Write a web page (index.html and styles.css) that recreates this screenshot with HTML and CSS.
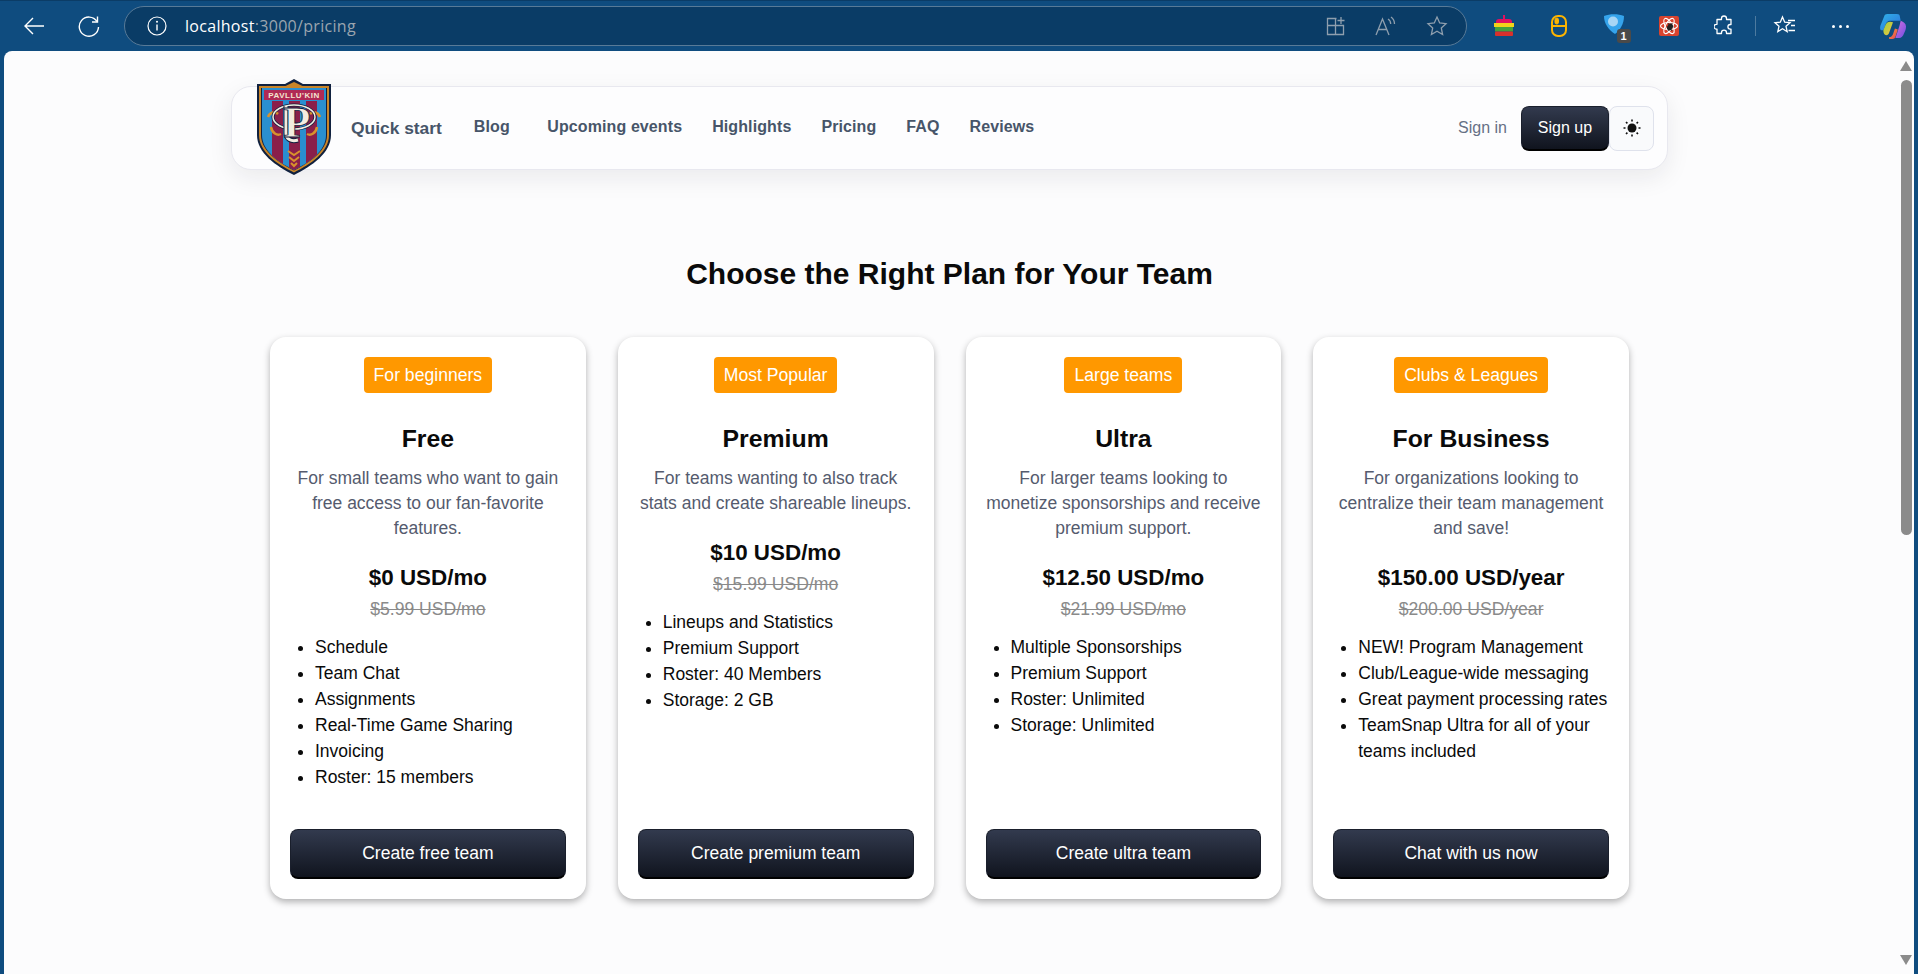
FILE: index.html

```html
<!DOCTYPE html>
<html lang="en">
  <head>
    <meta charset="UTF-8" />
    <meta name="viewport" content="width=device-width, initial-scale=1.0" />
    <title>Pricing</title>
    <link rel="stylesheet" href="styles.css">
  </head>
  <body>
    <!-- browser toolbar -->
    <div class="toolbar">
      <svg class="tool back" width="24" height="24" viewBox="0 0 24 24"><path d="M22 12H3M11 4l-8 8 8 8" fill="none" stroke="#fff" stroke-width="1.4"/></svg>
      <svg class="tool reload" width="24" height="24" viewBox="0 0 24 24"><path d="M20 7.5A9.6 9.6 0 1 0 21.5 13" fill="none" stroke="#fff" stroke-width="1.4"/><path d="M20.5 2.5v5.5h-5.5" fill="none" stroke="#fff" stroke-width="1.4"/></svg>
      <div class="address">
        <svg width="20" height="20" viewBox="0 0 20 20"><circle cx="10" cy="10" r="9" fill="none" stroke="#fff" stroke-width="1.2"/><path d="M10 8.5v6" stroke="#fff" stroke-width="1.4"/><circle cx="10" cy="5.8" r="1" fill="#fff"/></svg>
        <span class="url"><span class="host">localhost</span>:3000/pricing</span>
        <div class="address-icons">
          <svg width="20" height="20" viewBox="0 0 20 20" fill="none" stroke="#8f9fae" stroke-width="1.3"><path d="M10.500 2.500H1.500v16h16V9.500H1.500M9.500 2.500v16"/><path d="M15 1v7M11.500 4.500h7"/></svg>
          <svg width="22" height="20" viewBox="0 0 22 20" fill="none" stroke="#8f9fae" stroke-width="1.3"><path d="M1 19 7.500 3 14 19M3.500 13.500h8"/><path d="M13 3c1.700 1 2.700 3 2.700 5M16 1c2 1.500 3.500 4 3.500 7"/></svg>
          <svg width="22" height="22" viewBox="0 0 22 22" fill="none" stroke="#8f9fae" stroke-width="1.3"><path d="M11 2l2.700 6 6.300.7-4.700 4.300 1.300 6.500L11 16.200 5.400 19.500 6.700 13 2 8.700 8.300 8z"/></svg>
        </div>
      </div>
      <div class="extensions">
        <span class="ext-slot">
          <svg width="20" height="22" viewBox="0 0 20 22"><rect x="9" y="0" width="2" height="5" fill="#e0115f"/><path d="M2 9V7c0-2 1-3 3-3h10c2 0 3 1 3 3v2z" fill="#e0115f"/><rect x="0" y="8" width="20" height="4" fill="#f2d21a"/><rect x="1" y="12" width="18" height="4.500" fill="#43a33b"/><rect x="1" y="16.500" width="18" height="4.500" rx="1" fill="#d9302c"/></svg>
        </span>
        <span class="ext-slot">
          <svg width="16" height="22" viewBox="0 0 16 22" fill="none" stroke="#fdb400" stroke-width="2"><rect x="1" y="1" width="14" height="20" rx="6"/><path d="M1 11h14"/><rect x="4" y="3" width="3.500" height="6" rx="1.700" fill="#fdb400" stroke-width="1"/></svg>
        </span>
        <span class="ext-slot">
          <span class="shield-ext">
            <svg width="20" height="20" viewBox="0 0 20 20"><path d="M0 2C6-.5 14-.5 20 2c0 8-4 14-9 18C5 16 0 10 0 2z" fill="#35a4ec"/><circle cx="9" cy="7.500" r="5" fill="#a7d6f5"/></svg>
            <span class="ext-count">1</span>
          </span>
        </span>
        <span class="ext-slot">
          <svg width="20" height="20" viewBox="0 0 20 20"><rect width="20" height="20" rx="2" fill="#d9442f"/><g fill="none" stroke="#fff" stroke-width="1.100"><ellipse cx="10" cy="10" rx="8.500" ry="3.500"/><ellipse cx="10" cy="10" rx="8.500" ry="3.500" transform="rotate(60 10 10)"/><ellipse cx="10" cy="10" rx="8.500" ry="3.500" transform="rotate(120 10 10)"/></g><ellipse cx="11" cy="11" rx="2.600" ry="3.600" transform="rotate(30 11 11)" fill="#222"/><path d="M7.500 11l7 0M9 7l4 8M13 7l-4 8" stroke="#222" stroke-width=".8"/></svg>
        </span>
        <span class="ext-slot">
          <svg width="20" height="22" viewBox="0 0 20 22"><path d="M7.500 3.500a2.500 2.500 0 0 1 5 0V4.500h4.500v5h-.8a2.300 2.300 0 0 0 0 4.600h.8v4.400h-4.500v-.8a2.500 2.500 0 0 0-5 0v.8H3v-4.400h-.6a2.400 2.400 0 0 1 0-4.800H3V4.500h4.500z" fill="none" stroke="#fff" stroke-width="1.300" stroke-linejoin="round"/></svg>
        </span>
        <span class="tool-sep"></span>
        <span class="ext-slot">
          <svg width="24" height="24" viewBox="0 0 24 24" fill="none" stroke="#fff" stroke-width="1.300"><path d="M9.500 3l2.200 5.200 5.300.5-4 3.600 1.200 5.400-4.700-2.900-4.700 2.900 1.200-5.400-4-3.600 5.300-.5z"/><path d="M15 6.500h7M18 11.500h4M15.500 16.500h6.500"/></svg>
        </span>
        <span class="ext-slot dots"><i></i><i></i><i></i></span>
        <span class="ext-slot copilot">
          <svg width="28" height="27" viewBox="0 0 28 28"><defs><linearGradient id="cp1" x1="0" y1="0" x2="1" y2="1"><stop offset="0" stop-color="#2fb3e8"/><stop offset="1" stop-color="#2e6fdc"/></linearGradient><linearGradient id="cp2" x1="0" y1="0" x2="1" y2="1"><stop offset="0" stop-color="#d96fe0"/><stop offset="1" stop-color="#6d4fe0"/></linearGradient><linearGradient id="cp3" x1="0" y1="0" x2="1" y2="1"><stop offset="0" stop-color="#9ad045"/><stop offset="1" stop-color="#f5c43c"/></linearGradient><linearGradient id="cp4" x1="0" y1="0" x2="1" y2="1"><stop offset="0" stop-color="#f0a030"/><stop offset="1" stop-color="#e83c5c"/></linearGradient></defs><path d="M8 1h10c2 0 3 1 3 2l1 5H12c-4 0-5 2-6 5l-2 5H2C1 18 0 16 1 13L5 3c.5-1.300 1.500-2 3-2z" fill="url(#cp1)"/><path d="M22 8c3 1 5.500 3 5.500 6 0 3-1 5-2 7-1 3-3 5-5 5h-4l3-9c1-3 2-6 2.500-9z" fill="url(#cp2)"/><path d="M4 18l2-5c1-3 3-4 5-4l3 .5-4 11c-.5 1.500-1.500 2.500-3 2.500-2 0-3-2-3-5z" fill="url(#cp3)"/><path d="M10 25c2 0 3-1 4-3l2-6 3 1-2.500 8c-.5 1.200-1.500 2-3 2H10z" fill="url(#cp4)"/></svg>
        </span>
      </div>
    </div>

    <div class="page">
      <header class="nav">
        <svg class="logo" width="76" height="96" viewBox="0 0 76 96">
          <defs>
            <clipPath id="shieldclip"><path d="M6 9h64v47c0 16-16 27-32 35C22 83 6 72 6 56z"/></clipPath>
          </defs>
          <path d="M1 5h28l9-5 9 5h28v51c0 18-19 31-37 40C20 87 1 74 1 56z" fill="#10213f"/>
          <path d="M3 7h26.500l8.500-4 8.500 4H73v49c0 17-18 29-35 37.500C21 85 3 73 3 56z" fill="#c98528"/>
          <path d="M5 9h66v47c0 16-17 27-33 35.500C22 83 5 72 5 56z" fill="#10213f"/>
          <g clip-path="url(#shieldclip)">
            <rect x="6" y="9" width="64" height="86" fill="#2a8fd0"/>
            <rect x="16" y="22" width="11" height="72" fill="#8a1f4a"/>
            <rect x="33" y="22" width="11" height="72" fill="#8a1f4a"/>
            <rect x="50" y="22" width="11" height="72" fill="#8a1f4a"/>
            <rect x="8" y="11" width="60" height="10" fill="#b02a55"/>
          </g>
          <text class="logo-name" x="38" y="19" text-anchor="middle">PAVLLU'KIN</text>
          <path d="M12 38c2-5 7-6 10-3M64 38c-2-5-7-6-10-3M15 48c1 6 6 9 10 7M61 48c-1 6-6 9-10 7" fill="none" stroke="#d8922c" stroke-width="2.500"/>
          <ellipse cx="38" cy="38" rx="21" ry="12" fill="none" stroke="#10213f" stroke-width="3"/>
          <ellipse cx="38" cy="38" rx="21" ry="12" fill="none" stroke="#f3ece0" stroke-width="1.500"/>
          <path d="M30 27v27c0 6 5 9 12 7" fill="none" stroke="#10213f" stroke-width="5"/>
          <path d="M30 27v27c0 6 5 9 12 7" fill="none" stroke="#f3ece0" stroke-width="3"/>
          <text class="logo-mono" x="41" y="58" text-anchor="middle">P</text>
          <path d="M32 72l6 4 6-4M33 78l5 4 5-4M35 84l3 3 3-3" fill="none" stroke="#d8922c" stroke-width="2"/>
        </svg>
        <a class="nav-brand">Quick start</a>
        <nav class="nav-links">
          <a class="blog-link">Blog</a>
          <a>Upcoming events</a>
          <a>Highlights</a>
          <a>Pricing</a>
          <a>FAQ</a>
          <a>Reviews</a>
        </nav>
        <div class="nav-right">
          <a class="sign-in">Sign in</a>
          <button class="btn-dark sign-up">Sign up</button>
          <button class="theme-btn">
            <svg width="20" height="20" viewBox="0 0 20 20"><circle cx="10" cy="10" r="4.500" fill="#111"/><path d="M10 1.500v2M10 16.500v2M1.500 10h2M16.500 10h2M4 4l1.400 1.400M14.600 14.600 16 16M4 16l1.400-1.400M14.600 5.400 16 4" stroke="#111" stroke-width="1.600"/></svg>
          </button>
        </div>
      </header>

      <h1 class="title">Choose the Right Plan for Your Team</h1>

      <main class="plans">
        <section class="card">
          <span class="badge">For beginners</span>
          <h2>Free</h2>
          <p class="desc">For small teams who want to gain free access to our fan-favorite features.</p>
          <div class="price">$0 USD/mo</div>
          <div class="old-price">$5.99 USD/mo</div>
          <ul>
            <li>Schedule</li>
            <li>Team Chat</li>
            <li>Assignments</li>
            <li>Real-Time Game Sharing</li>
            <li>Invoicing</li>
            <li>Roster: 15 members</li>
          </ul>
          <button class="btn-dark card-btn">Create free team</button>
        </section>

        <section class="card">
          <span class="badge">Most Popular</span>
          <h2>Premium</h2>
          <p class="desc">For teams wanting to also track stats and create shareable lineups.</p>
          <div class="price">$10 USD/mo</div>
          <div class="old-price">$15.99 USD/mo</div>
          <ul>
            <li>Lineups and Statistics</li>
            <li>Premium Support</li>
            <li>Roster: 40 Members</li>
            <li>Storage: 2 GB</li>
          </ul>
          <button class="btn-dark card-btn">Create premium team</button>
        </section>

        <section class="card">
          <span class="badge">Large teams</span>
          <h2>Ultra</h2>
          <p class="desc">For larger teams looking to monetize sponsorships and receive premium support.</p>
          <div class="price">$12.50 USD/mo</div>
          <div class="old-price">$21.99 USD/mo</div>
          <ul>
            <li>Multiple Sponsorships</li>
            <li>Premium Support</li>
            <li>Roster: Unlimited</li>
            <li>Storage: Unlimited</li>
          </ul>
          <button class="btn-dark card-btn">Create ultra team</button>
        </section>

        <section class="card">
          <span class="badge">Clubs &amp; Leagues</span>
          <h2>For Business</h2>
          <p class="desc">For organizations looking to centralize their team management and save!</p>
          <div class="price">$150.00 USD/year</div>
          <div class="old-price">$200.00 USD/year</div>
          <ul>
            <li>NEW! Program Management</li>
            <li>Club/League-wide messaging</li>
            <li>Great payment processing rates</li>
            <li>TeamSnap Ultra for all of your teams included</li>
          </ul>
          <button class="btn-dark card-btn">Chat with us now</button>
        </section>
      </main>

      <!-- fake scrollbar, sits over the page -->
      <div class="scrollbar">
        <span class="arrow up"></span>
        <span class="thumb"></span>
        <span class="arrow down"></span>
      </div>
    </div>
  </body>
</html>
```

FILE: styles.css

```css
* {
  box-sizing: border-box;
}

html,
body {
  height: 100%;
}

body {
  margin: 0;
  display: flex;
  flex-direction: column;
  overflow: hidden;
  font-family: "Liberation Sans", Arial, sans-serif;
  background-color: #0f4c7f;
}

/* browser chrome */
.toolbar {
  height: 51px;
  flex: none;
  display: flex;
  align-items: center;
  padding: 0 0 0 22px;
  border-top: 1px solid #0b3c66;
}

.tool.back {
  margin-right: 31px;
}

.tool.reload {
  margin-right: 23px;
}

.address {
  width: 1343px;
  height: 40px;
  flex: none;
  display: flex;
  align-items: center;
  padding: 0 18px 0 22px;
  background-color: #0a3c66;
  border: 1px solid #587a97;
  border-radius: 20px;
}

.url {
  margin-left: 18px;
  font-family: "Open Sans", sans-serif;
  font-size: 16px;
  letter-spacing: 0.3px;
  color: #9aa5af;
}

.host {
  color: #fff;
}

.address-icons {
  margin-left: auto;
  display: flex;
  align-items: center;
  gap: 29px;
}

.extensions {
  margin-left: 9px;
  flex: 1;
  display: flex;
  align-items: center;
}

.ext-slot {
  width: 55px;
  flex: none;
  display: flex;
  align-items: center;
  justify-content: center;
}

.ext-slot.copilot {
  width: 50px;
}

.shield-ext {
  position: relative;
  height: 20px;
  top: -2px;
}

.ext-count {
  position: absolute;
  right: -7px;
  bottom: -9px;
  width: 14px;
  height: 14px;
  font-size: 11px;
  font-weight: bold;
  line-height: 14px;
  text-align: center;
  color: #fff;
  background-color: #4a4a4a;
  border-radius: 3px;
}

.tool-sep {
  width: 1px;
  height: 20px;
  flex: none;
  margin: 0 1.500px 0 4px;
  background-color: #4d7a9f;
}

.dots {
  gap: 4px;
}

.dots i {
  width: 3px;
  height: 3px;
  background-color: #fff;
  border-radius: 50%;
}

/* page */
.page {
  position: relative;
  flex: 1;
  margin: 0 4px;
  padding: 35px 39px 0 20px;
  background-color: #fcfcfd;
  border-radius: 8px 8px 0 0;
}

.nav {
  width: 1437px;
  height: 84px;
  margin: 0 auto;
  padding: 0 13px 0 24px;
  display: flex;
  align-items: center;
  background-color: #fdfdfe;
  border: 1px solid #e8e8ef;
  border-radius: 20px;
  box-shadow: 0 8px 24px rgba(20, 20, 40, 0.08);
}

.logo {
  flex: none;
  margin: -8px 0 -6px 0;
}

.logo-name {
  font-size: 8px;
  font-weight: bold;
  letter-spacing: 0.5px;
  fill: #f4e6d0;
}

.logo-mono {
  font-family: "Liberation Serif", serif;
  font-size: 44px;
  font-weight: bold;
  fill: #f3ece0;
  stroke: #10213f;
  stroke-width: 0.8px;
}

.nav-brand {
  margin-left: 19px;
  font-size: 17.400px;
  font-weight: bold;
  color: #475569;
}

.nav-links {
  margin-left: 32px;
  display: flex;
  gap: 30px;
  font-size: 16px;
  font-weight: bold;
  letter-spacing: 0.1px;
  color: #475569;
}

.nav-links a {
  position: relative;
  top: -1px;
}

.blog-link {
  margin-right: 7.500px;
}

.nav-right {
  margin-left: auto;
  display: flex;
  align-items: center;
}

.sign-in {
  margin-right: 14px;
  font-size: 16px;
  color: #667085;
}

.btn-dark {
  font-family: "Liberation Sans", Arial, sans-serif;
  font-size: 16px;
  color: #fff;
  background: linear-gradient(to bottom, #323a4e, #10141e);
  border: 1px solid #1a1f2c;
  border-bottom: 2px solid #000;
  border-radius: 8px;
  cursor: pointer;
}

.sign-up {
  width: 88px;
  height: 45px;
}

.theme-btn {
  width: 45px;
  height: 45px;
  padding: 0;
  display: flex;
  align-items: center;
  justify-content: center;
  background-color: #f9fafc;
  border: 1px solid #dfe2ec;
  border-radius: 8px;
}

.title {
  margin: 86px 0 45px 0;
  font-size: 30px;
  line-height: 36px;
  text-align: center;
  color: #0a0a0a;
}

.plans {
  width: 1359px;
  margin: 0 auto;
  display: grid;
  grid-template-columns: repeat(4, 1fr);
  gap: 32px;
}

.card {
  height: 562px;
  padding: 20px;
  display: flex;
  flex-direction: column;
  align-items: center;
  background-color: #fff;
  border-radius: 16px;
  box-shadow: 0 3px 7px rgba(0, 0, 0, 0.3);
}

.badge {
  padding: 0 10px;
  font-size: 17.600px;
  line-height: 36px;
  color: #fff;
  background-color: #ff9800;
  border-radius: 4px;
}

.card h2 {
  margin: 31px 0 0 0;
  font-size: 24.800px;
  line-height: 30px;
  color: #0a0a0a;
}

.desc {
  margin: 12px 0 0 0;
  font-size: 17.500px;
  line-height: 25px;
  text-align: center;
  color: #555b6e;
}

.price {
  margin-top: 22px;
  font-size: 22.400px;
  font-weight: bold;
  line-height: 30px;
  color: #0a0a0a;
}

.old-price {
  margin-top: 6px;
  font-size: 17.600px;
  line-height: 20px;
  text-decoration: line-through;
  color: #8a8a8a;
}

.card ul {
  width: 100%;
  margin: 15px 0 0 0;
  padding: 0 0 0 25px;
  font-size: 17.500px;
  line-height: 26px;
  color: #0a0a0a;
}

.card-btn {
  width: 100%;
  height: 50px;
  margin-top: auto;
  flex: none;
  font-size: 17.500px;
}

/* scrollbar */
.scrollbar {
  position: absolute;
  top: 0;
  right: 0;
  bottom: 0;
  width: 16px;
  display: flex;
  flex-direction: column;
  align-items: center;
}

.thumb {
  width: 11px;
  height: 455px;
  margin-top: 9px;
  background-color: #8b8b8b;
  border-radius: 6px;
}

.arrow {
  width: 0;
  height: 0;
  border-left: 6px solid transparent;
  border-right: 6px solid transparent;
}

.arrow.up {
  margin-top: 10px;
  border-bottom: 10px solid #8b8b8b;
}

.arrow.down {
  margin-top: auto;
  margin-bottom: 9px;
  border-top: 10px solid #8b8b8b;
}
```
